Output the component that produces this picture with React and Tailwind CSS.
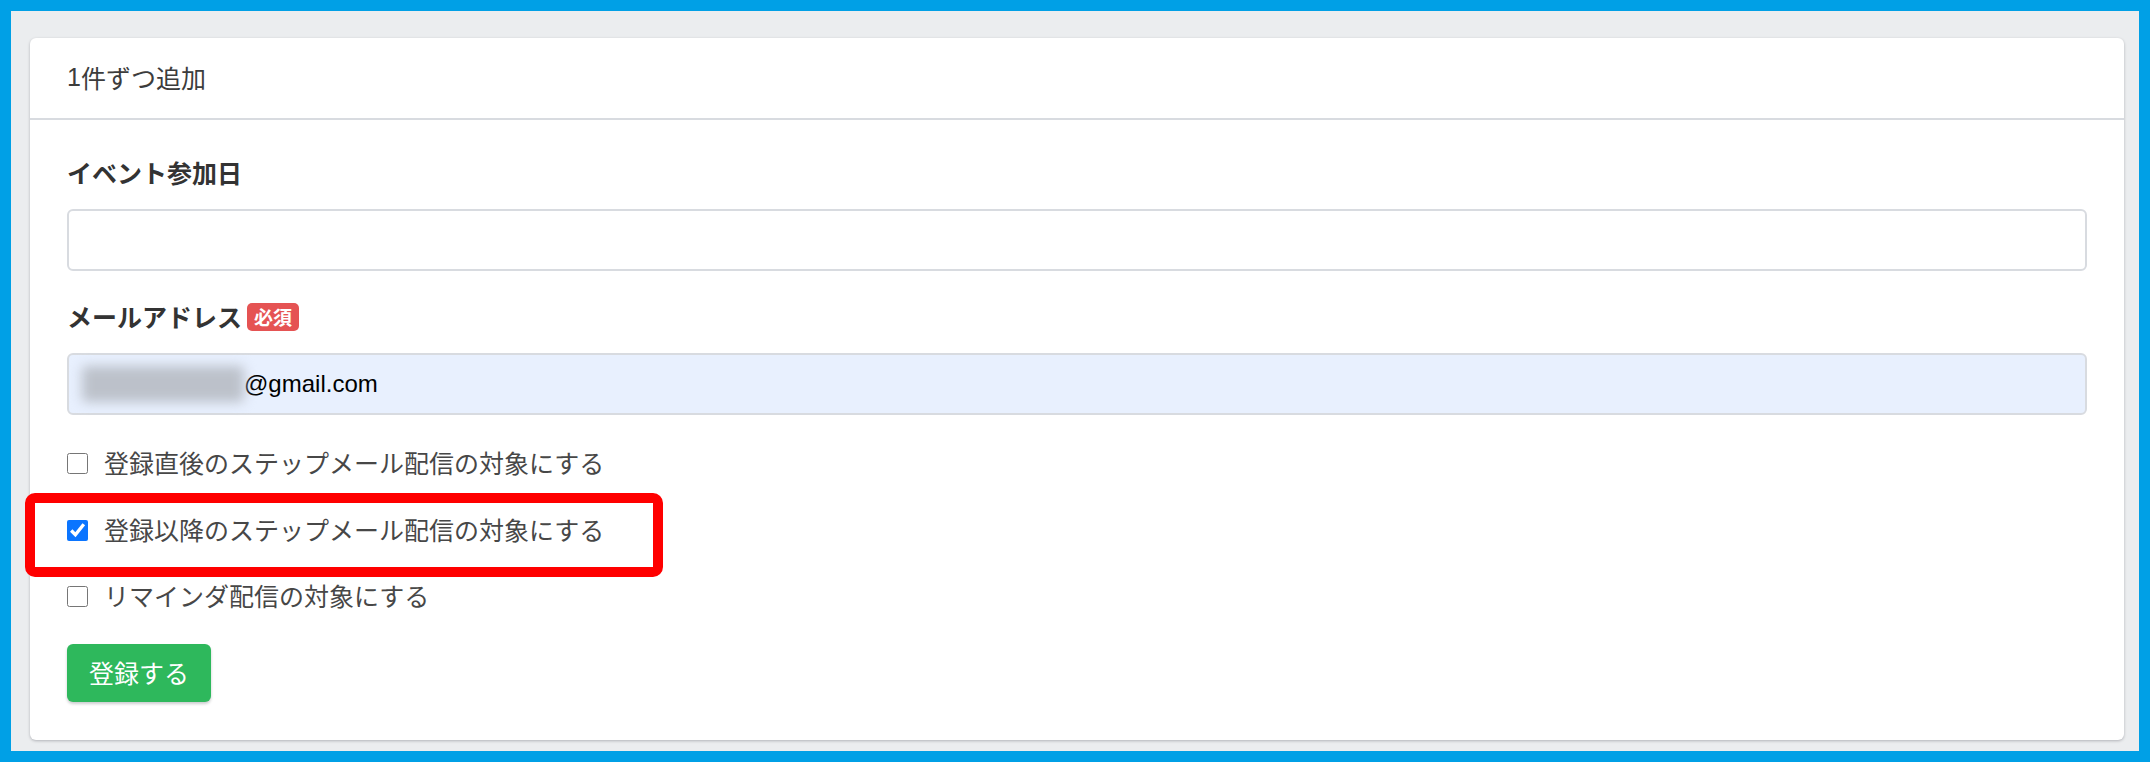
export default function App() {
  const jp = { fontFamily: '"Noto Sans CJK JP", "Liberation Sans", sans-serif' };
  const latin = { fontFamily: '"Liberation Sans", "Noto Sans CJK JP", sans-serif' };

  return (
    <div className="relative w-[2150px] h-[762px] border-[11px] border-[#00a0e6] bg-[#ebedef] pt-[27px] pl-[19px] pr-[15px] pb-[11px]" style={jp}>
      <div className="h-[702px] bg-white rounded-md shadow-[0_1px_3px_rgba(0,0,21,0.25)] flex flex-col">
        {/* header */}
        <div className="h-[82px] border-b-2 border-[#d8dbe0] px-[37px] flex items-center text-[25px] text-[#3c3c3c]">
          <span style={latin}>1</span>件ずつ追加
        </div>

        {/* body */}
        <div className="px-[37px] pt-[35px] flex flex-col">
          <div className="h-[36px] flex items-center text-[25px] font-bold text-[#333]">イベント参加日</div>
          <div className="mt-[18px] h-[62px] border-2 border-[#d8dbe0] rounded-md bg-white"></div>

          <div className="mt-[28px] h-[36px] flex items-center gap-[5px]">
            <span className="text-[25px] font-bold text-[#333]">メールアドレス</span>
            <span className="h-[28px] px-[7px] rounded-[5px] bg-[#e55353] text-white text-[19px] font-bold flex items-center">必須</span>
          </div>
          <div className="mt-[18px] h-[62px] border-2 border-[#d8dbe0] rounded-md bg-[#e8f0fe] flex items-center pl-[13px]">
            <span className="w-[162px] h-[36px] bg-[#bcc1ca] blur-[6px] rounded"></span>
            <span className="text-[24px] text-black" style={latin}>@gmail.com</span>
          </div>

          <label className="mt-[30px] h-[36px] flex items-center gap-[16px] text-[25px] text-[#474747]">
            <input type="checkbox" className="w-[21px] h-[21px] m-0" />
            登録直後のステップメール配信の対象にする
          </label>
          <label className="mt-[31px] h-[36px] flex items-center gap-[16px] text-[25px] text-[#474747]">
            <input type="checkbox" defaultChecked className="w-[21px] h-[21px] m-0 accent-[#0b75ff]" />
            登録以降のステップメール配信の対象にする
          </label>
          <label className="mt-[30px] h-[36px] flex items-center gap-[16px] text-[25px] text-[#474747]">
            <input type="checkbox" className="w-[21px] h-[21px] m-0" />
            リマインダ配信の対象にする
          </label>

          <div className="mt-[30px]">
            <button className="w-[144px] h-[58px] rounded-md bg-[#2eb85c] text-white text-[25px] shadow-[0_2px_3px_rgba(0,0,21,0.2)]">
              登録する
            </button>
          </div>
        </div>
      </div>

      {/* red annotation box */}
      <div className="absolute left-[14px] top-[482px] w-[638px] h-[84px] border-[10px] border-[#ff0000] rounded-[10px]"></div>
    </div>
  );
}
